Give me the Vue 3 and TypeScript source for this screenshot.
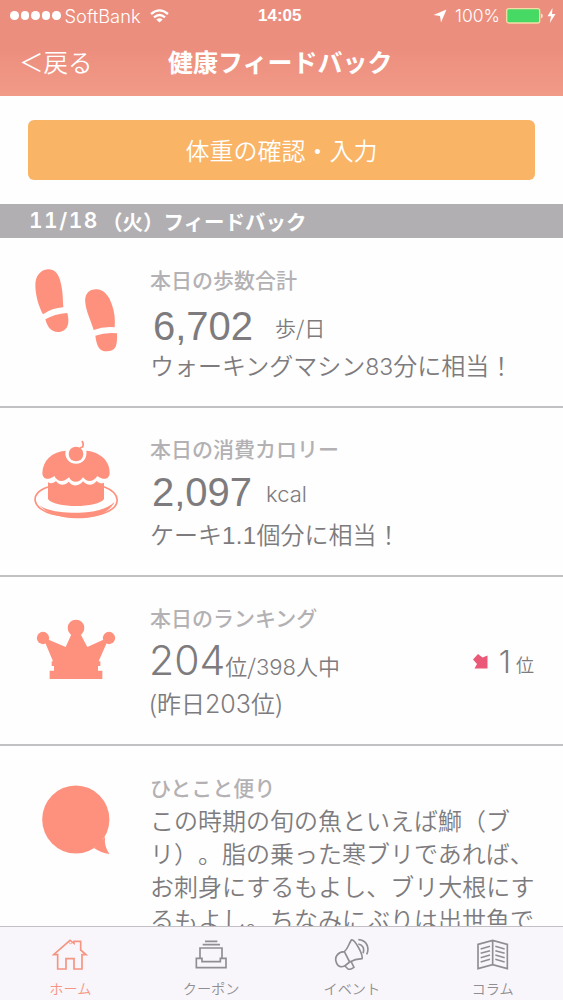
<script setup lang="ts">
interface Tab {
  id: string
  label: string
}

const tabs: Tab[] = [
  { id: 'home', label: 'ホーム' },
  { id: 'coupon', label: 'クーポン' },
  { id: 'event', label: 'イベント' },
  { id: 'column', label: 'コラム' },
]
const activeTab = 'home'

const message: string[] = [
  'この時期の旬の魚といえば鰤（ブ',
  'リ）。脂の乗った寒ブリであれば、',
  'お刺身にするもよし、ブリ大根にす',
  'るもよし。ちなみにぶりは出世魚で',
]
</script>

<template>
  <div class="screen">
    <header class="top">
      <div class="status">
        <div class="carrier">
          <i v-for="n in 5" :key="n" class="dot"></i>
          <span class="carrier-name">SoftBank</span>
          <svg class="wifi" width="19" height="14" viewBox="0 0 19 14">
            <path d="M1 5Q9.500-2.200 18 5M4 8.300Q9.500 3.600 15 8.300" fill="none" stroke="#fff" stroke-width="2.300" />
            <path d="M6.300 10.600Q9.500 7.900 12.700 10.600L9.500 13.500Z" fill="#fff" />
          </svg>
        </div>
        <span class="clock">14:05</span>
        <div class="power">
          <svg width="14" height="14" viewBox="0 0 14 14">
            <path d="M13.500.5 8 13.500 7 7 .5 6Z" fill="#fff" />
          </svg>
          <span class="percent">100%</span>
          <svg width="37" height="16" viewBox="0 0 37 16">
            <rect x=".7" y=".7" width="33" height="14.300" rx="2" fill="#46d964" stroke="#f6dca8" stroke-width="1.300" />
            <path d="M35 5.500Q36.800 6 36.800 7.900T35 10.300Z" fill="#f6e6d6" />
          </svg>
          <svg class="bolt" width="9" height="15" viewBox="0 0 9 15">
            <path d="M5.500 0 .5 8.300H4L2.800 15 8.500 6H5Z" fill="#fff" />
          </svg>
        </div>
      </div>
      <nav class="nav">
        <span class="back">＜戻る</span>
        <h1 class="title">健康フィードバック</h1>
      </nav>
    </header>

    <main class="content">
      <button class="weight">体重の確認・入力</button>
      <h2 class="date"><span class="day">11/18</span>（火）フィードバック</h2>

      <section class="row steps">
        <svg class="icon" width="120" height="110" viewBox="0 0 360 330" fill="#fe917e">
          <path d="M84 43C59 45 45 66 46 93C47 124 56 153 69 178Q96 159 130 157C128 128 129 105 120 75C114 54 101 42 84 43Z" />
          <path d="M76 193Q103 177 142 174C149 204 145 224 122 230C97 234 84 222 76 193Z" />
          <path d="M226 103C203 105 193 121 196 144C199 172 213 197 221 225Q250 214 284 217C286 195 284 171 276 150C267 121 250 101 226 103Z" />
          <path d="M226 242Q255 232 291 235C292 267 290 288 263 289C238 290 230 274 226 242Z" />
        </svg>
        <div class="body">
          <h3 class="label">本日の歩数合計</h3>
          <p class="value"><b class="num">6,702</b><span class="unit">歩/日</span></p>
          <p class="detail">ウォーキングマシン<span class="fig">83</span>分に相当！</p>
        </div>
      </section>

      <section class="row calories">
        <svg class="icon" width="120" height="100" viewBox="0 0 360 300" fill="#fe917e">
          <path d="M84 171C24 190 34 240 111 255C167 265 211 263 247 251C307 232 304 190 252 170" fill="none" stroke="#fe917e" stroke-width="5" />
          <path d="M58 225C82 246 142 249 179 248C220 247 260 239 284 215C267 251 220 266 168 265C119 264 76 248 58 225Z" />
          <path d="M84 157C93 162 102 159 108 153C118 168 135 167 146 155C156 170 178 170 189 154C201 168 220 167 230 153C238 161 246 161 252 158V207C234 235 102 235 84 207Z" />
          <path d="M137 62C94 66 69 91 67 129C68 150 87 151 103 138C113 156 130 158 147 142C156 160 177 160 189 142C201 158 220 156 232 138C249 151 268 150 269 129C270 92 240 66 199 62C202 83 190 101 168 101C147 101 132 82 137 62Z" />
          <circle cx="168" cy="72" r="22" />
          <path d="M174 67Q180 50 188 51Q192 41 186 33" fill="none" stroke="#fe917e" stroke-width="5" />
        </svg>
        <div class="body">
          <h3 class="label">本日の消費カロリー</h3>
          <p class="value"><b class="num">2,097</b><span class="unit kcal">kcal</span></p>
          <p class="detail">ケーキ<span class="ratio">1.1</span>個分に相当！</p>
        </div>
      </section>

      <section class="row ranking">
        <svg class="icon" width="120" height="90" viewBox="0 0 360 270" fill="#fe917e">
          <circle cx="168" cy="69" r="25" />
          <circle cx="69" cy="99" r="18.500" />
          <circle cx="267" cy="99" r="18.500" />
          <path d="M75 112 86 104 137 126 155 86H181L202 126 250 104 261 112 236 169H241V183H234V197H247V222H89V197H102V183H95V169H99Z" />
        </svg>
        <div class="body">
          <h3 class="label">本日のランキング</h3>
          <p class="value"><span class="rank">204</span><span class="total">位/<span class="of">398</span>人中</span></p>
          <p class="detail">(昨日<span class="prev">203</span>位)</p>
        </div>
        <div class="change">
          <svg width="15" height="15" viewBox="0 0 15 15">
            <path d="M5 0 9.500 3.500 14.500 1.500V14.500H1.500L4 10 0 5.500Z" fill="#ea5a78" />
          </svg>
          <span class="step">1</span><span class="place">位</span>
        </div>
      </section>

      <section class="row note">
        <svg class="icon" width="120" height="90" viewBox="0 0 120 90" fill="#fe917e">
          <ellipse cx="55.800" cy="34.500" rx="33.600" ry="34" />
          <path d="M74 63Q81 68 89.500 69Q84 62 85 52Z" />
        </svg>
        <div class="body">
          <h3 class="label">ひとこと便り</h3>
          <p class="message"><span v-for="line in message" :key="line" class="line">{{ line }}</span></p>
        </div>
      </section>
    </main>

    <footer class="tabs">
      <a v-for="tab in tabs" :key="tab.id" class="tab" :class="{ active: tab.id === activeTab }">
        <svg width="36" height="32" viewBox="0 0 108 96" fill="none" stroke="currentColor" stroke-width="5">
          <g v-if="tab.id === 'home'">
            <path d="M17 93V50H5L54 7 66 16V10H86V36L102 50H90V93H66V62H42V93Z" />
            <path d="M49 12 55 18 61 14" stroke-width="2.500" />
          </g>
          <g v-else-if="tab.id === 'coupon'">
            <path d="M36 10H73M29 20H81M21 60V30H87V60M10 61H27V71H82V61H99V89H10Z" />
          </g>
          <g v-else-if="tab.id === 'event'" stroke-linejoin="round">
            <path d="M52 6C44 18 42 32 31 41C12 42 2 56 6 70C10 86 20 89 32 84L47 72C60 65 70 63 84 62C88 50 61 0 52 6ZM31 41 47 72M33 84 42 93Q46 97 60 88L52 72" />
            <path d="M73 18C87 20 92 32 87 46M73 5C97 6 108 28 98 49" />
          </g>
          <g v-else>
            <path d="M9 19 53 7 97 19V92L53 80 9 92ZM53 7V80" />
            <path d="M17 33 45 25M17 46 45 38M17 59 45 51M17 72 45 64M61 25 89 33M61 38 89 46M61 51 89 59M61 64 89 72" stroke-width="4.500" />
          </g>
        </svg>
        <span class="tab-label">{{ tab.label }}</span>
      </a>
    </footer>
  </div>
</template>

<style>
body {
  margin: 0;
  overflow: hidden;
}
</style>

<style scoped>
.screen {
  width: 563px;
  height: 1000px;
  overflow: hidden;
  display: flex;
  flex-direction: column;
  background: #fefefe;
  color: #7d7b7d;
  font-family: "Noto Sans CJK JP", sans-serif;
  font-weight: 350;
  text-spacing-trim: space-all;
}
h1, h2, h3, p { margin: 0; }
svg { display: block; flex: none; }
.top {
  height: 96px;
  flex: none;
  color: #fff;
  background: linear-gradient(#eb8e7d 0%, #ec8e7e 50%, #f29a88 100%);
}
.status {
  height: 31px;
  display: grid;
  grid-template-columns: 248px 43px 1fr;
  align-items: center;
  font-family: "Liberation Sans", sans-serif;
  padding: 0 7px 0 10px;
}
.carrier, .power { display: flex; align-items: center; }
.power { justify-content: flex-end; }
.dot {
  width: 8.500px;
  height: 8.500px;
  border-radius: 50%;
  background: #fff;
  margin-right: 2px;
  flex: none;
}
.carrier-name {
  font-family: Inter, "Liberation Sans", sans-serif;
  margin: 0 9px 0 2px;
  font-size: 18.300px;
}
.clock { font-weight: 700; font-size: 17px; }
.percent {
  font-family: Inter, "Liberation Sans", sans-serif;
  font-size: 17.500px;
  margin: 0 6px 0 8px;
}
.bolt { margin-left: 4px; }
.nav {
  display: grid;
  grid-template-columns: 168px 1fr;
  height: 60px;
  align-items: center;
}
.back { font-size: 24.500px; padding-left: 19px; }
.title { font-size: 25px; line-height: 36px; font-weight: 700; }
.content { flex: 1; min-height: 0; overflow: hidden; }
.weight {
  display: block;
  width: 507px;
  height: 60px;
  margin: 24px 28px;
  padding: 0 0 2px;
  border: 0;
  border-radius: 6px;
  background: #f9b466;
  color: #fff;
  font: inherit;
  font-size: 24px;
}
.date {
  height: 34px;
  line-height: 34px;
  padding-left: 29px;
  background: #b1afb2;
  color: #fff;
  font-size: 20.500px;
  font-weight: 700;
  white-space: nowrap;
  display: flex;
}
.day {
  font-family: Inter, sans-serif;
  font-weight: 600;
  font-size: 21px;
  font-variant-numeric: tabular-nums;
  width: 73px;
  letter-spacing: 1.500px;
}
.row {
  box-sizing: border-box;
  height: 169px;
  display: flex;
  padding-left: 20px;
  border-bottom: 2px solid #c1c0c2;
}
.steps { height: 170px; }
.note { height: 190px; border: 0; }
.icon { margin-top: 22px; }
.steps .icon { margin-top: 17px; }
.ranking .icon { margin-top: 28px; }
.note .icon { margin-top: 39px; }
.body { padding: 28px 0 0 10px; white-space: nowrap; }
.steps .body { padding-top: 29px; }
.note .body { padding-top: 29px; }
.label { font-size: 21px; line-height: 24px; font-weight: 500; color: #b3b1b3; }
.value { height: 59px; line-height: 64px; }
.steps .value { line-height: 70px; }
.detail { font-size: 24px; line-height: 30px; }
.num {
  font-family: "Liberation Sans", sans-serif;
  font-weight: 400;
  font-size: 40px;
  margin-left: 2px;
}
.steps .num { margin-left: 3px; }
.unit {
  font-size: 21px;
  line-height: 1;
  margin-left: 22px;
  vertical-align: 4px;
}
.unit.kcal { font-family: Inter, sans-serif; font-size: 22px; margin-left: 14px; }
.fig { font-family: Inter, sans-serif; font-size: 23px; }
.ratio {
  font-family: "Liberation Sans", sans-serif;
  font-weight: 400;
  letter-spacing: .4px;
}
.ranking .value { line-height: 62px; }
.rank { font-family: Inter, sans-serif; font-size: 41px; margin-left: -1px; }
.total { font-size: 22px; }
.of { font-family: Inter, sans-serif; font-size: 22px; }
.ranking .detail { margin-left: -1px; }
.prev { font-family: Inter, sans-serif; font-size: 25px; line-height: 1; }
.change {
  margin-left: auto;
  padding: 62px 29px 0 0;
  height: 44px;
  display: flex;
  align-items: center;
}
.step { font-family: Inter, sans-serif; font-size: 31px; margin: 0 5px 0 11px; }
.place { font-size: 18px; padding-top: 6px; }
.message { font-size: 24px; line-height: 33px; padding-top: 4px; }
.line { display: block; }
.tabs {
  height: 74px;
  flex: none;
  box-sizing: border-box;
  border-top: 1px solid #c2c0c4;
  background: #f8f6fa;
  display: grid;
  grid-template-columns: repeat(4, 1fr);
}
.tab {
  display: flex;
  flex-direction: column;
  align-items: center;
  padding-top: 11px;
  color: #908e92;
}
.tab.active { color: #f59583; }
.tab-label { font-size: 14.200px; line-height: 20px; margin-top: 8px; }
</style>
